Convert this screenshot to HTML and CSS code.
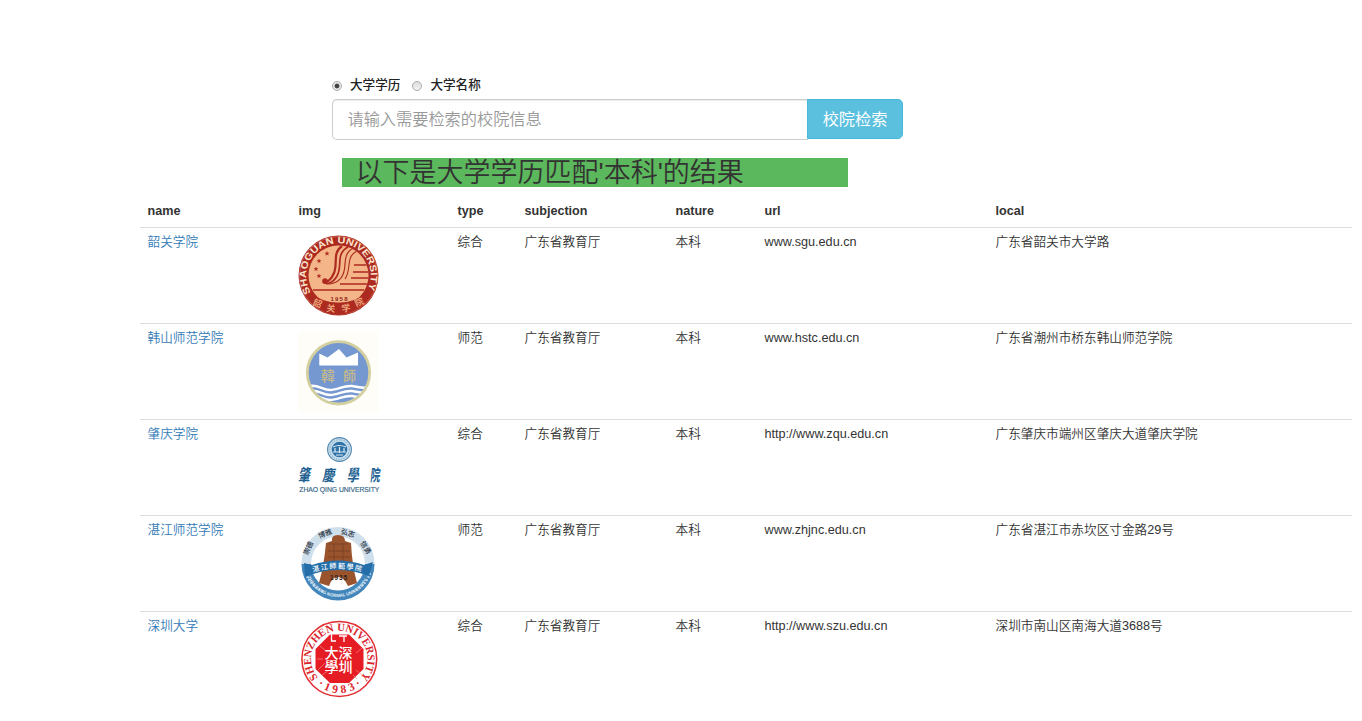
FILE: index.html
```html
<!DOCTYPE html>
<html lang="zh-CN">
<head>
<meta charset="utf-8">
<title>校院检索</title>
<link rel="stylesheet" href="styles.css">
</head>
<body>
<form class="search">
  <div class="options">
    <label class="option"><span class="radio checked"></span>大学学历</label>
    <label class="option"><span class="radio"></span>大学名称</label>
  </div>
  <div class="input-group">
    <input class="field" type="text" placeholder="请输入需要检索的校院信息">
    <button class="submit" type="button">校院检索</button>
  </div>
</form>
<h2 class="result-title">以下是大学学历匹配'本科'的结果</h2>
<table class="results">
  <colgroup><col class="c-name"><col class="c-img"><col class="c-type"><col class="c-sub"><col class="c-nature"><col class="c-url"><col class="c-local"></colgroup>
  <thead>
    <tr><th>name</th><th>img</th><th>type</th><th>subjection</th><th>nature</th><th>url</th><th>local</th></tr>
  </thead>
  <tbody>
    <tr>
      <td><a class="link">韶关学院</a></td>
      <td><svg class="logo" viewBox="0 0 81 81">
        <defs>
          <path id="sg-top" d="M13 57.5A32.3 32.3 0 1 1 68 57.5"/>
          <clipPath id="sg-clip"><circle cx="40.5" cy="40.5" r="30"/></clipPath>
          <path id="star" d="M0-2.6L.7-.8L2.5-.8L1 .4L1.6 2.2L0 1.1L-1.6 2.2L-1 .4L-2.5-.8L-.7-.8Z"/>
        </defs>
        <circle cx="40.5" cy="40.5" r="40" fill="#ad2a20"/>
        <circle cx="40.5" cy="40.5" r="39" fill="none" stroke="#d07a62" stroke-width=".6"/>
        <circle cx="40.5" cy="40.5" r="30" fill="#f4b688"/>
        <g clip-path="url(#sg-clip)" fill="none" stroke="#ad2a20">
          <path d="M44 11C34 18 40 29 36 38C33 45 29 48 26 46" stroke-width="2.2"/>
          <path d="M50 12C37 19 45 31 39 41C35 48 29 50 25 47" stroke-width="1.7"/>
          <path d="M55 13C42 21 51 33 43 43C38 49 31 50 26 48" stroke-width="1.2"/>
          <path d="M59 16C47 22 54 34 47 44" stroke-width="1.1"/>
          <path d="M56 30H74M55 37H74M53 43H74M42 49H72M15 55H66" stroke-width="1.5"/>
        </g>
        <circle cx="27" cy="46" r="2.8" fill="#ad2a20"/>
        <g fill="#ad2a20"><use href="#star" x="29" y="18.5"/><use href="#star" x="21" y="26"/><use href="#star" x="18" y="34"/><use href="#star" x="21" y="41"/></g>
        <path d="M12 58Q26 68 40.5 67.5Q55 68 69 58L65 69Q54 79.5 40 80Q25 79 16 69Z" fill="#ad2a20"/>
        <text class="sans-bold" font-size="9.4" fill="#fce5cf"><textPath href="#sg-top" textLength="133" lengthAdjust="spacingAndGlyphs">SHAOGUAN UNIVERSITY</textPath></text>
        <text class="sans-bold" x="32.5" y="65.5" font-size="6" fill="#8f241c" textLength="17">1958</text>
        <g class="script" font-size="9" fill="#f4b688"><text x="15" y="71" transform="rotate(20 18 68)">韶</text><text x="28.5" y="76.5" transform="rotate(7 33 73)">关</text><text x="43.5" y="76.5" transform="rotate(-12 48 73)">学</text><text x="57" y="71" transform="rotate(-25 60 68)">院</text></g>
      </svg></td>
      <td>综合</td><td>广东省教育厅</td><td>本科</td><td>www.sgu.edu.cn</td><td>广东省韶关市大学路</td>
    </tr>
    <tr>
      <td><a class="link">韩山师范学院</a></td>
      <td><svg class="logo" viewBox="0 0 81 81">
        <defs><clipPath id="hs-clip"><circle cx="40.5" cy="41.8" r="30"/></clipPath></defs>
        <rect width="81" height="81" fill="#fefdf7"/>
        <circle cx="40.5" cy="41.8" r="31.2" fill="#7698d0" stroke="#d3cf9f" stroke-width="2.8"/>
        <path d="M21.3 34.5V22.5L29.5 26.5L41 18L48.5 26.5L60 21.5V34.5Z" fill="#fff"/>
        <g class="script" font-size="14" fill="#c5b98a"><text x="23" y="49.5">韓</text><text x="45" y="49.5" textLength="13" lengthAdjust="spacingAndGlyphs">師</text></g>
        <g clip-path="url(#hs-clip)" fill="none" stroke="#fff" stroke-width="2.5">
          <path d="M9 55.5C19 52 24 59 32 59S46 54 54 55S64 58 73 56"/>
          <path d="M9 60.5C19 57 24 64 32 64S46 59 54 60S64 63 73 61"/>
          <path d="M9 65.5C19 62 24 69 32 69S46 64 54 65S64 68 73 66"/>
        </g>
      </svg></td>
      <td>师范</td><td>广东省教育厅</td><td>本科</td><td>www.hstc.edu.cn</td><td>广东省潮州市桥东韩山师范学院</td>
    </tr>
    <tr>
      <td><a class="link">肇庆学院</a></td>
      <td><svg class="logo" viewBox="0 0 81 81">
        <circle cx="41.5" cy="22.5" r="11.9" fill="#c8deed" stroke="#5287ad" stroke-width="1.1"/>
        <circle cx="41.5" cy="22.5" r="9.8" fill="none" stroke="#8db5d2" stroke-width="1.2" stroke-dasharray="1.5 1"/>
        <circle cx="41.5" cy="22.5" r="7.8" fill="#2d71a6"/>
        <path d="M35 20Q41 17 48 20M35 25H48M37 21V25M41.5 20V26M46 21V25M38 28H45" stroke="#d9eaf5" stroke-width="1.2" fill="none"/>
        <g class="script-bold" font-size="14" fill="#215f91"><text transform="translate(0 54) skewX(-10) scale(.85 1.2)">肇</text><text transform="translate(24 54) skewX(-10) scale(.9 1.1)">慶</text><text transform="translate(49 54) skewX(-8) scale(.85 1.15)">學</text><text transform="translate(72 54) skewX(-6) scale(.7 1.15)">院</text></g>
        <text class="sans" x="1" y="64.8" font-size="6.8" fill="#315f83" stroke="#315f83" stroke-width=".15" textLength="80" lengthAdjust="spacing" transform="translate(.3 0) scale(1 1)">ZHAO QING UNIVERSITY</text>
      </svg></td>
      <td>综合</td><td>广东省教育厅</td><td>本科</td><td>http://www.zqu.edu.cn</td><td>广东肇庆市端州区肇庆大道肇庆学院</td>
    </tr>
    <tr>
      <td><a class="link">湛江师范学院</a></td>
      <td><svg class="logo" viewBox="0 0 81 81">
        <defs>
          <path id="zj-bottom" d="M9 53A33.4 33.4 0 0 0 71 53"/>
          <path id="zj-ribbon" d="M15 49Q40 42 65 49"/>
        </defs>
        <circle cx="40" cy="40.5" r="36.5" fill="#cfdfeb"/>
        <path d="M3.5 41H76.5A36.5 36.5 0 0 1 3.5 41Z" fill="#4386bb"/>
        <circle cx="40" cy="40.5" r="27" fill="#fff"/>
        <path d="M8 50Q12 63 26 69M72 50Q68 63 54 69" fill="none" stroke="#b9d5e8" stroke-width="2.5" stroke-dasharray="1.5 2"/>
        <path d="M34 18Q33 12 40 12T47 18L53 20Q54 42 59 60L50 63Q46 54 40 54T31 63L21 60Q26 42 28 20Z" fill="#99532d"/>
        <path d="M31 21H50M30 28H52M30 34H52M36 20V38M45 20V38" stroke="#6c391f" stroke-width=".9" opacity=".6"/>
        <path d="M14 42Q40 33 66 42L75 39L71 53L65 51Q40 43 15 51L7 54L6 40Z" fill="#246fa9"/>
        <text class="script" font-size="7" fill="#fff"><textPath href="#zj-ribbon" textLength="49">湛江師範學院</textPath></text>
        <text class="sans-bold" x="32" y="56.5" font-size="6.5" fill="#31241c" textLength="17">1935</text>
        <g class="script" font-size="7" fill="#29333d"><text transform="translate(9.5 32.5) rotate(-65)">崇德</text><text transform="translate(21.5 15.5) rotate(-22)">博雅</text><text transform="translate(42.5 10.5) rotate(16)">弘志</text><text transform="translate(62 20) rotate(58)">信勇</text></g>
        <text class="sans-bold" font-size="4.5" fill="#e1eef6"><textPath href="#zj-bottom" textLength="74" startOffset="1" lengthAdjust="spacingAndGlyphs">ZHANJIANG NORMAL UNIVERSITY</textPath></text>
      </svg></td>
      <td>师范</td><td>广东省教育厅</td><td>本科</td><td>www.zhjnc.edu.cn</td><td>广东省湛江市赤坎区寸金路29号</td>
    </tr>
    <tr>
      <td><a class="link">深圳大学</a></td>
      <td><svg class="logo" viewBox="0 0 81 81">
        <defs>
          <path id="sz-top" d="M20 58.5A28.2 28.2 0 1 1 62.6 58.5"/>
          <path id="sz-bottom" d="M17 64A34.2 34.2 0 0 0 65.6 64"/>
        </defs>
        <circle cx="41.3" cy="40" r="37.4" fill="#fff" stroke="#e22c32" stroke-width="1.5"/>
        <path d="M32 15.5H51L65.5 30V50L51 64H32L17.5 50V30Z" fill="#e51c24"/>
        <path d="M20 51L27 44M24 56L31 51M58 51L64 56M55 56L59 60M19 40H25M58 34L64 29M22 27L28 32" stroke="#f58d8f" stroke-width=".7"/>
        <path d="M33.5 15V22H38M41 17H49M46 17V23" stroke="#fff" stroke-width="1.3" fill="none"/>
        <g class="seal" font-size="14" fill="#fff"><text x="40.5" y="38.5">深</text><text x="26.5" y="38.5">大</text><text x="40.5" y="53">圳</text><text x="26.5" y="53">學</text></g>
        <text class="serif-bold" font-size="11" fill="#d9252c"><textPath href="#sz-top" textLength="129" lengthAdjust="spacingAndGlyphs">SHENZHEN UNIVERSITY</textPath></text>
        <text class="serif-bold" font-size="11.5" fill="#dd272e"><textPath href="#sz-bottom" startOffset="3" textLength="48">·1983·</textPath></text>
      </svg></td>
      <td>综合</td><td>广东省教育厅</td><td>本科</td><td>http://www.szu.edu.cn</td><td>深圳市南山区南海大道3688号</td>
    </tr>
  </tbody>
</table>
</body>
</html>
```
FILE: styles.css
```css
* { box-sizing: border-box; }
html, body { height: 100%; }
body {
  margin: 0;
  padding-top: 76px;
  overflow: hidden;
  background: #fff;
  color: #333;
  font: 12.6px/18px "Liberation Sans", "Noto Sans CJK SC", sans-serif;
}
.search { width: 571px; margin-left: 332px; }
.options { display: flex; height: 23px; }
.option { display: flex; align-items: center; height: 17px; margin-right: 12px; font-weight: 500; color: #222; }
.radio {
  width: 10px; height: 10px; margin: 3px 8px 0 0;
  border: 1px solid #aaa; border-radius: 50%;
  background: linear-gradient(#ddd, #f2f2f2);
}
.checked { background: radial-gradient(circle, #444 0 2px, #e8e8e8 2.8px); }
.input-group { display: flex; height: 41px; align-items: flex-start; }
.field {
  width: 476px; height: 41px; padding: 0 14.5px;
  border: 1px solid #ccc; border-right-width: 0; border-radius: 5px 0 0 5px;
  box-shadow: inset 0 1px 1px rgba(0, 0, 0, .075);
  font: 350 16.2px "Liberation Sans", "Noto Sans CJK SC", sans-serif;
}
.field::placeholder { color: #999; opacity: 1; }
.submit {
  width: 96px; height: 40px; margin-left: -1px; padding: 0 0 2px;
  border: 1px solid #46b8da; border-radius: 0 5px 5px 0;
  background: #5bc0de; color: #fff;
  font: 16.2px "Liberation Sans", "Noto Sans CJK SC", sans-serif;
}
.result-title {
  width: 506px; height: 29px; margin: 18px 0 0 342px; padding: 1px 0 0 13.5px;
  background: #5cb85c; color: #333;
  font: 350 27px/29px "Liberation Sans", "Noto Sans CJK SC", sans-serif;
}
.results { width: 1212px; margin: 7px 0 0 140px; border-collapse: separate; border-spacing: 0; table-layout: fixed; }
.c-name { width: 151px; }
.c-img { width: 159px; }
.c-type { width: 67px; }
.c-sub { width: 151px; }
.c-nature { width: 89px; }
.c-url { width: 231px; }
th { height: 33px; padding: 1px 7.5px 0; text-align: left; vertical-align: middle; color: #333; }
td { height: 96px; padding: 5px 7.5px 0; border-top: 1px solid #ddd; vertical-align: top; font-size: 12.65px; font-weight: 350; }
.link { color: #337ab7; }
.logo { display: block; width: 81px; height: 81px; margin: 2px 0 0 -.5px; overflow: visible; }
.sans { font-family: "Liberation Sans", sans-serif; }
.sans-bold { font-family: "Liberation Sans", sans-serif; font-weight: 700; }
.serif-bold { font-family: "Liberation Serif", serif; font-weight: 700; }
.script, .seal { font-family: "Noto Sans CJK SC", sans-serif; font-weight: 500; }
.script-bold { font-family: "Noto Sans CJK SC", sans-serif; font-weight: 700; }
```
